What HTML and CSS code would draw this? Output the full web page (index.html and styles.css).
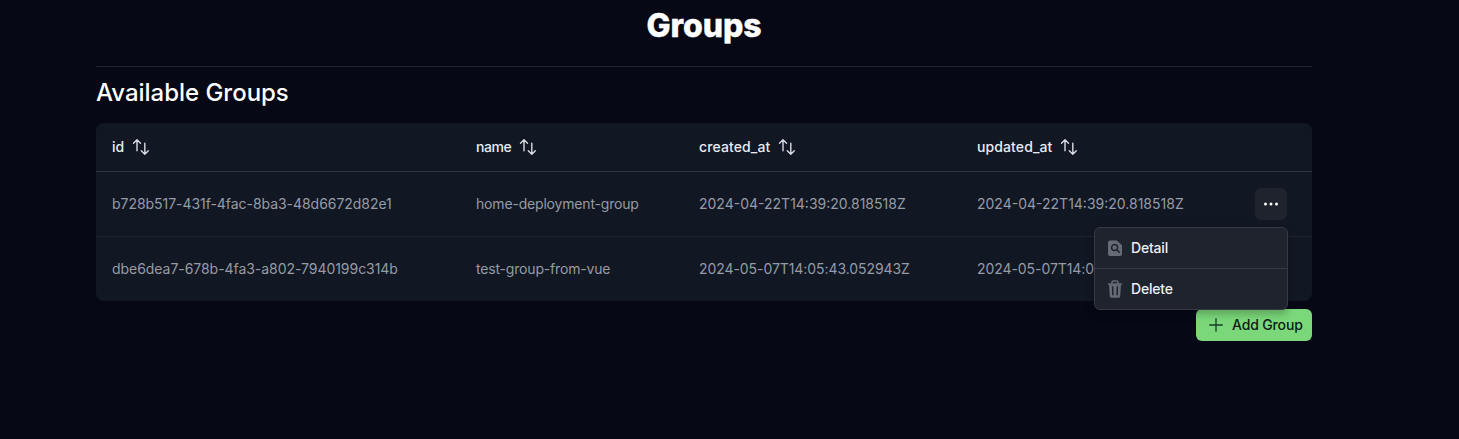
FILE: index.html
```html
<!DOCTYPE html>
<html lang="en">
<head>
<meta charset="utf-8">
<title>Groups</title>
<link rel="stylesheet" href="styles.css">
</head>
<body>
<svg class="sprite" aria-hidden="true">
  <symbol id="sort" viewBox="0 0 18 18"><path d="M5 12.8V2M1.5 5.3 5 1.8l3.5 3.5M12.8 5.2V16M9.3 12.7l3.5 3.5 3.5-3.5"/></symbol>
</svg>
<main class="page">
  <h1 class="title">Groups</h1>
  <section class="groups">
    <h2 class="subtitle">Available Groups</h2>
    <div class="table">
      <div class="row head">
        <div class="cell"><span>id</span><svg class="sort"><use href="#sort"/></svg></div>
        <div class="cell"><span class="tight">name</span><svg class="sort"><use href="#sort"/></svg></div>
        <div class="cell"><span class="wide">created_at</span><svg class="sort"><use href="#sort"/></svg></div>
        <div class="cell"><span class="wide">updated_at</span><svg class="sort"><use href="#sort"/></svg></div>
        <div class="cell"></div>
      </div>
      <div class="row">
        <div class="cell uuid">b728b517-431f-4fac-8ba3-48d6672d82e1</div>
        <div class="cell name">home-deployment-group</div>
        <div class="cell">2024-04-22T14:39:20.818518Z</div>
        <div class="cell">2024-04-22T14:39:20.818518Z</div>
        <div class="cell actions">
          <button class="more" aria-label="Actions"><svg width="16" height="16" viewBox="0 0 16 16" fill="currentColor"><circle cx="2.5" cy="8" r="1.5"/><circle cx="8" cy="8" r="1.5"/><circle cx="13.5" cy="8" r="1.5"/></svg></button>
          <div class="menu">
            <div class="item">
              <svg class="item-icon" viewBox="0 0 16 18"><path fill="currentColor" d="M3 1.5h6.8L15 6.2V15a2 2 0 0 1-2 2H3a2 2 0 0 1-2-2V3.5a2 2 0 0 1 2-2z"/><circle class="lens" cx="7.6" cy="8.6" r="3"/><path class="lens" d="m9.8 10.8 3 3"/></svg>
              <span>Detail</span>
            </div>
            <div class="item">
              <svg class="item-icon" viewBox="0 0 16 18"><path fill="currentColor" d="M2 4.5h12l-.8 11.4a2 2 0 0 1-2 1.9H4.8a2 2 0 0 1-2-1.9z"/><path class="bin-line" d="M1.5 4h13M5 3.6V2.2Q5 1 6.2 1h3.6Q11 1 11 2.2v1.4"/><path class="bin-slot" d="m5.6 6.3.3 8.9M10.4 6.3l-.3 8.9"/></svg>
              <span>Delete</span>
            </div>
          </div>
        </div>
      </div>
      <div class="row">
        <div class="cell uuid">dbe6dea7-678b-4fa3-a802-7940199c314b</div>
        <div class="cell name">test-group-from-vue</div>
        <div class="cell date">2024-05-07T14:05:43.052943Z</div>
        <div class="cell date">2024-05-07T14:05:43.052943Z</div>
        <div class="cell"></div>
      </div>
    </div>
    <button class="add"><svg width="16" height="16" viewBox="0 0 16 16"><path d="M8 1.2v13.6M1.2 8h13.6"/></svg><span>Add Group</span></button>
  </section>
</main>
</body>
</html>
```
FILE: styles.css
```css
* { box-sizing: border-box; }
body {
  margin: 0;
  min-height: 439px;
  background: #060815;
  color: #fff;
  font: 14px/20px Inter, sans-serif;
}
button { font: inherit; border: 0; padding: 0; }
.sprite { display: none; }
.page { width: 1216px; margin-left: 96px; padding-top: 6px; }
.title {
  margin: 0;
  height: 60px;
  text-align: center;
  font-size: 32px;
  line-height: 40px;
  font-weight: 800;
  letter-spacing: -0.1px;
  -webkit-text-stroke: 0.4px #fff;
}
.groups {
  display: flex;
  flex-direction: column;
  border-top: 1px solid #20232d;
  padding-top: 8px;
}
.subtitle {
  margin: 0 0 12px;
  font-size: 24px;
  line-height: 36px;
  font-weight: 500;
  letter-spacing: -0.03px;
}
.table { border-radius: 8px; background: #111723; color: #979ba5; }
.row {
  display: grid;
  grid-template-columns: 364px 223px 278px 278px 73px;
  height: 65px;
  border-bottom: 1px solid #1e2430;
}
.row:last-child { height: 64px; border-bottom: 0; }
.row.head {
  height: 49px;
  border-color: #303640;
  color: #e9ebf0;
  font-weight: 500;
}
.cell { display: flex; align-items: center; gap: 8px; padding: 0 16px; white-space: nowrap; }
.uuid { letter-spacing: -0.045px; }
.name { letter-spacing: -0.18px; }
.date { letter-spacing: -0.07px; }
.tight { letter-spacing: -0.4px; }
.wide { letter-spacing: 0.1px; }
.sort {
  width: 18px;
  height: 18px;
  fill: none;
  stroke: #d8dbe2;
  stroke-width: 1.4;
  stroke-linecap: round;
  stroke-linejoin: round;
}
.actions { position: relative; }
.more {
  display: grid;
  place-items: center;
  flex: none;
  width: 32px;
  height: 32px;
  border-radius: 6px;
  background: #1e232d;
  color: #fff;
}
.menu {
  position: absolute;
  z-index: 1;
  top: 55px;
  right: 24px;
  width: 194px;
  border: 1px solid #343943;
  border-radius: 6px;
  background: #1e232e;
  color: #eceef3;
  font-weight: 500;
  letter-spacing: -0.2px;
  box-shadow: 0 4px 8px rgb(0 0 0 / 25%);
}
.item { display: flex; align-items: center; gap: 8px; height: 40px; padding: 0 12px; }
.item + .item { height: 41px; border-top: 1px solid #343943; }
.item-icon { width: 16px; height: 18px; color: #666b76; }
.lens { fill: none; stroke: #1e232e; stroke-width: 1.5; }
.bin-line { fill: none; stroke: #666b76; stroke-width: 1.5; stroke-linecap: round; }
.bin-slot { fill: none; stroke: #1e232e; stroke-width: 1.5; }
.add {
  display: flex;
  align-items: center;
  align-self: flex-end;
  gap: 8px;
  width: 116px;
  height: 32px;
  margin-top: 8px;
  padding-left: 12px;
  border-radius: 6px;
  background: #7bd87a;
  color: #0c1c16;
  font-weight: 500;
  letter-spacing: -0.15px;
  white-space: nowrap;
}
.add svg { flex: none; fill: none; stroke: #173a28; stroke-width: 1.3; }
```
